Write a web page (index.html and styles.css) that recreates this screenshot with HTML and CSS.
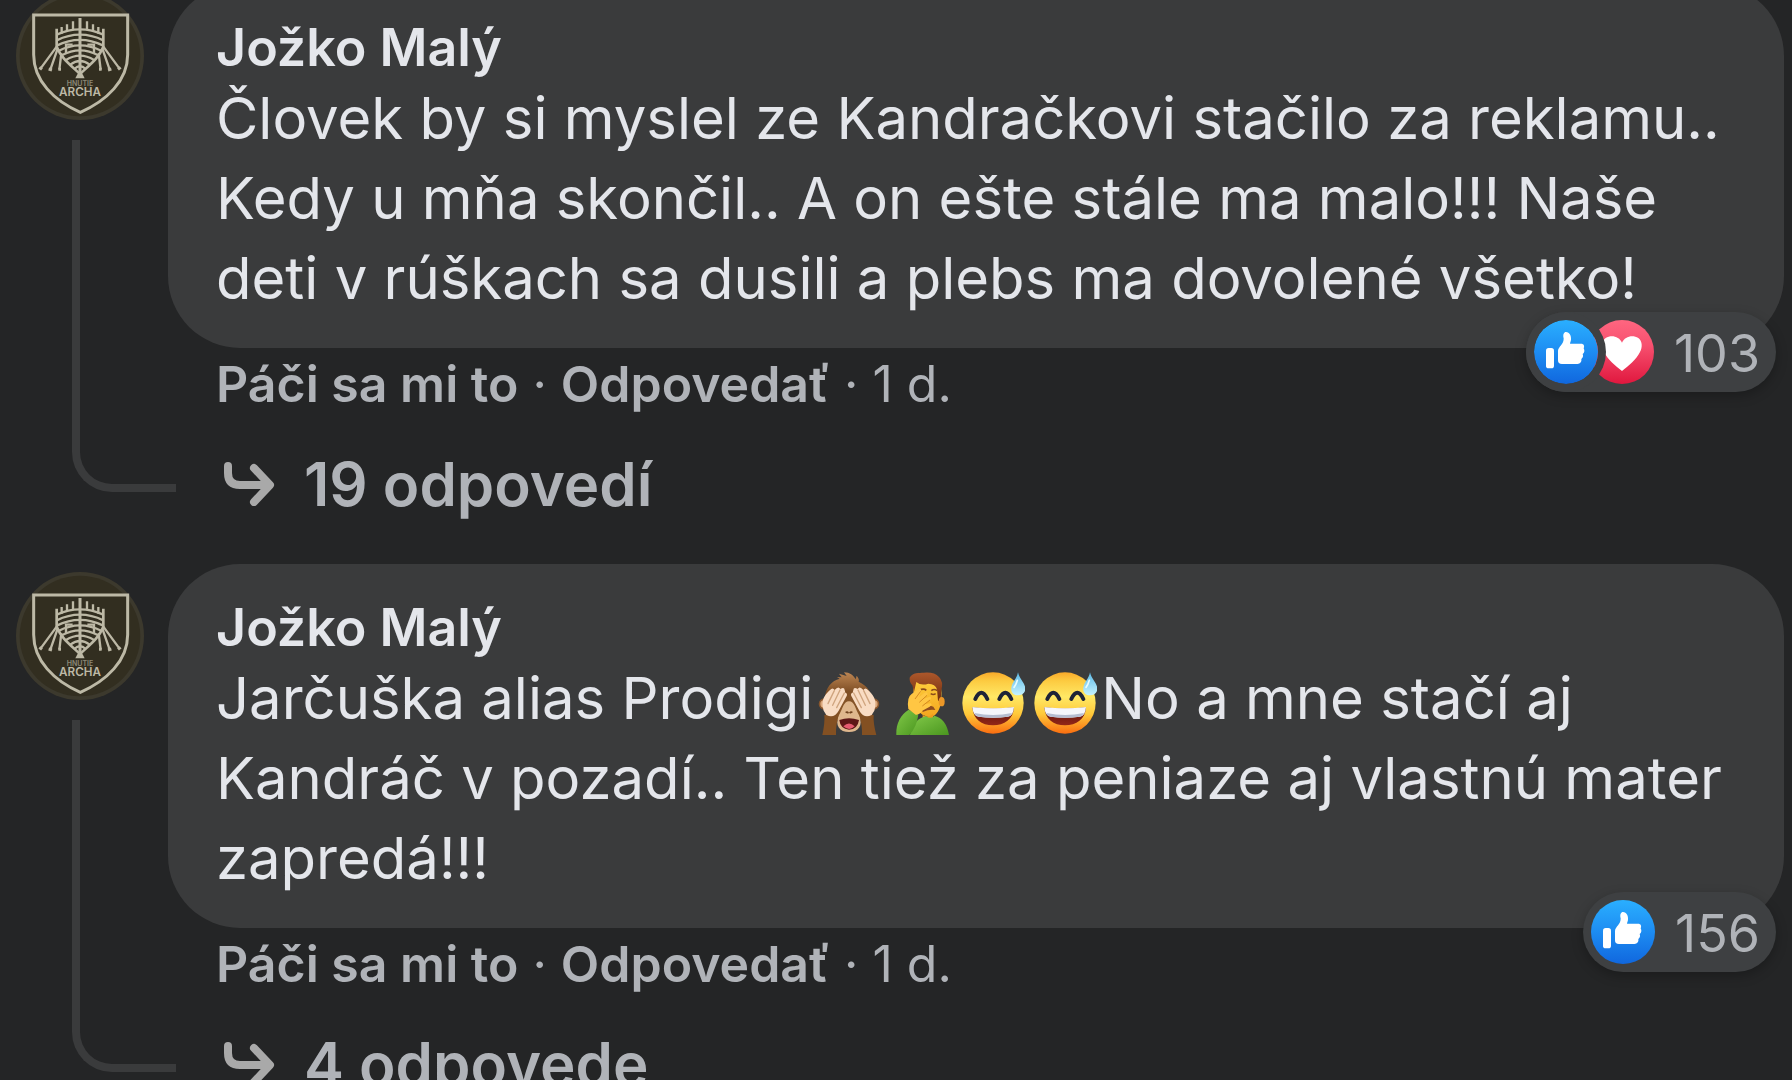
FILE: index.html
```
<!DOCTYPE html>
<html lang="sk">
  <head>
    <meta charset="UTF-8" />
    <meta name="viewport" content="width=device-width, initial-scale=1.0" />
    <title>Komentáre</title>
    <link rel="stylesheet" href="styles.css">
  </head>
  <body>
    <!-- shared icons -->
    <svg class="defs" width="0" height="0" aria-hidden="true">
      <defs>
        <linearGradient id="blue" x1="0" y1="0" x2="0" y2="1">
          <stop offset="0" stop-color="#2aafff" />
          <stop offset="0.5" stop-color="#1d8cf2" />
          <stop offset="1" stop-color="#1067de" />
        </linearGradient>
        <linearGradient id="red" x1="0" y1="0" x2="0" y2="1">
          <stop offset="0" stop-color="#ff6680" />
          <stop offset="0.4" stop-color="#f7506f" />
          <stop offset="1" stop-color="#e0173e" />
        </linearGradient>
        <linearGradient id="face" x1="0" y1="0" x2="0" y2="1">
          <stop offset="0" stop-color="#f9a92a" />
          <stop offset="0.14" stop-color="#fccb41" />
          <stop offset="0.4" stop-color="#ffe865" />
          <stop offset="0.68" stop-color="#ffc93a" />
          <stop offset="1" stop-color="#fa6d10" />
        </linearGradient>
        <linearGradient id="mouth" x1="0" y1="0" x2="0" y2="1">
          <stop offset="0" stop-color="#55100c" />
          <stop offset="1" stop-color="#942717" />
        </linearGradient>
        <linearGradient id="drop" x1="0" y1="0" x2="0" y2="1">
          <stop offset="0" stop-color="#5bb9e6" />
          <stop offset="1" stop-color="#c5f2ff" />
        </linearGradient>
        <linearGradient id="fur" x1="0" y1="0" x2="0" y2="1">
          <stop offset="0" stop-color="#bd8653" />
          <stop offset="0.4" stop-color="#805026" />
          <stop offset="1" stop-color="#8b5829" />
        </linearGradient>
        <linearGradient id="shirt" x1="0" y1="0" x2="1" y2="1">
          <stop offset="0" stop-color="#82c949" />
          <stop offset="1" stop-color="#4a961f" />
        </linearGradient>
        <linearGradient id="hair" x1="0" y1="0" x2="0" y2="1">
          <stop offset="0" stop-color="#ad572b" />
          <stop offset="1" stop-color="#71300f" />
        </linearGradient>
        <linearGradient id="skin" x1="0" y1="0" x2="0" y2="1">
          <stop offset="0" stop-color="#ffcf3d" />
          <stop offset="1" stop-color="#f3a51f" />
        </linearGradient>

        <symbol id="logo" viewBox="0 0 384 384">
          <circle cx="192" cy="192" r="192" fill="#3c392d" />
          <circle cx="192" cy="192" r="181" fill="#322e20" />
          <g fill="none" stroke="#bdb9a6" stroke-width="9">
            <path d="M53 69H335V188C335 266 272 326 193 361C114 326 53 266 53 188Z" />
            <path d="M192 78V250" stroke-width="9" />
            <path d="M122 110V164C136 198 158 214 192 246C226 214 248 198 262 164V110" stroke-width="8" />
            <g stroke-width="7">
              <path d="M137 105V125M153 97V120M171 88V115M213 88V115M231 97V120M247 105V125" />
              <path d="M122 128Q192 96 262 128M122 145Q192 111 262 145M122 161Q192 126 262 161" />
              <path d="M127 177Q192 143 257 177M137 190Q192 160 247 190M150 204Q192 178 234 204M163 218Q192 196 221 218M175 231Q192 215 209 231" />
              <path d="M122 164L74 229M125 170L103 233M136 184L130 233M262 164L310 229M259 170L281 233M248 184L254 233" />
              <path d="M150 184V158H170M234 184V158H214" />
            </g>
            <path d="M70 226l8 6M98 231l10 3M127 232h8M314 226l-8 6M286 231l-10 3M257 232h-8" />
          </g>
          <path d="M192 232L206 259H178Z" fill="#bdb9a6" />
          <text x="192" y="283" class="logo-small">HNUTIE</text>
          <text x="192" y="313" class="logo-big">ARCHA</text>
        </symbol>

        <symbol id="like" viewBox="0 0 192 192">
          <circle cx="96" cy="96" r="96" fill="url(#blue)" />
          <rect x="36" y="84" width="24" height="61" rx="8" fill="#fff" />
          <path fill="#fff" d="M72 93C73 80 90 73 89 55C86 43 90 36 96 36C107 36 112 48 111 58C111 66 106 71 109 71H141C150 71 152 78 149 85C153 92 151 99 146 102C149 109 146 114 142 117C144 128 136 132 127 132H84C76 132 72 129 72 121Z" />
        </symbol>

        <symbol id="heart" viewBox="0 0 192 192">
          <circle cx="96" cy="96" r="96" fill="url(#red)" />
          <path fill="#fff" d="M96 68C88 49 64 43 47 54C35 63 34 82 42 96C53 119 77 138 96 153C115 138 139 119 150 96C158 82 157 63 145 54C128 43 104 49 96 68Z" />
        </symbol>

        <symbol id="arrow" viewBox="0 0 52 44">
          <path d="M4 4V11Q4 23 16 23H45M30 6L46 23L30 40" fill="none" stroke="#a9a9a9" stroke-width="8" stroke-linecap="round" stroke-linejoin="round" />
        </symbol>

        <symbol id="monkey" viewBox="0 0 192 192">
          <circle cx="22" cy="99" r="17" fill="#8b572d" />
          <circle cx="170" cy="99" r="17" fill="#8b572d" />
          <circle cx="21" cy="99" r="11" fill="#dba77a" />
          <circle cx="171" cy="99" r="11" fill="#dba77a" />
          <path d="M22 88C25 48 45 29 68 23L60 18L74 19L66 8L89 15L81 4C99 5 109 12 116 25L119 14Q128 25 125 32C152 44 167 68 169 100L158 147H35Z" fill="url(#fur)" />
          <path d="M96 91C79 91 78 113 65 134C53 163 68 183 96 183C124 183 139 163 127 134C114 113 113 91 96 91Z" fill="#dfb78d" />
          <path d="M22 132L67 123Q56 160 57 192H16Q24 155 22 132ZM170 132L125 123Q136 160 135 192H178Q168 155 170 132Z" fill="#835022" />
          <g id="paw">
            <path d="M20 119C9 84 27 69 39 57Q47 48 53 57Q64 43 70 54Q82 47 83 57L85 65Q94 67 87 79L65 119Q51 144 28 132Z" fill="#f9dcc3" />
            <path d="M52 59L33 98M69 57L47 103M82 66L59 110" fill="none" stroke="#cfa47e" stroke-width="4" stroke-linecap="round" />
          </g>
          <use href="#paw" transform="matrix(-1 0 0 1 192 0)" />
          <path d="M86 125q5-4 8 2M98 127q4-6 8-2" fill="none" stroke="#70431f" stroke-width="5" />
          <path d="M67 147Q96 137 126 147Q122 175 96 176Q70 174 67 147Z" fill="#5e1717" />
          <path d="M79 166Q96 149 113 166Q97 182 79 166Z" fill="#e65b70" />
        </symbol>

        <symbol id="facepalm" viewBox="0 0 192 192">
          <g transform="translate(13 0)">
            <path d="M60 36Q95 18 139 35Q149 61 141 103C136 128 119 142 103 137Q72 131 61 92Z" fill="url(#skin)" />
            <path d="M49 20C57 3 78 6 91 5Q123 2 137 18Q151 31 144 59L142 89H134L131 55Q126 39 105 38Q83 45 69 33L62 62L57 43Q48 34 49 20Z" fill="url(#hair)" />
            <ellipse cx="145" cy="92" rx="9" ry="14" fill="#eb9728" />
            <path d="M78 58q13-7 21 0M114 59q8-7 18 0" fill="none" stroke="#8b4b1b" stroke-width="5" />
            <path d="M112 68q8 5 15 0" fill="none" stroke="#8b4b1b" stroke-width="4" />
            <path d="M86 114Q101 99 120 107L126 117Q107 114 88 123Z" fill="#8e4c20" />
            <path d="M88 132Q105 143 119 128V151H88Z" fill="#ee9c1b" />
            <path d="M50 192C57 159 75 140 98 136Q112 146 123 134Q158 142 167 192Z" fill="url(#shirt)" />
            <path d="M9 192C7 157 23 130 46 116L75 131Q70 168 48 192Z" fill="url(#shirt)" />
            <path d="M45 114Q40 79 54 70L76 53Q84 50 84 61L77 78L94 65Q104 61 102 72L91 83L109 77Q117 79 110 87L92 99L112 97Q119 101 109 107L87 119Q78 132 67 131Z" fill="#ffc643" />
            <path d="M82 61L65 84M101 73L78 94M110 87L87 105" fill="none" stroke="#d58b22" stroke-width="3" />
          </g>
        </symbol>

        <symbol id="sweat" viewBox="0 0 192 192">
          <g transform="translate(3 0)">
            <circle cx="93" cy="96" r="92" fill="url(#face)" />
            <path d="M40 84Q58 47 76 84M112 84Q130 47 148 84" fill="none" stroke="#1e2337" stroke-width="12" stroke-linecap="round" />
            <path d="M31 109Q93 117 156 109C154 145 127 163 93 163C58 163 34 145 31 109Z" fill="url(#mouth)" />
            <path d="M31 108Q93 116 156 108Q154 137 137 137Q94 143 50 137Q33 136 31 108Z" fill="#f5f6fb" />
            <path d="M37 126Q93 138 150 126Q144 137 137 137Q94 143 50 137Q41 136 37 126Z" fill="#b5bdd0" />
            <path d="M168 4C172 24 190 36 190 54C190 66 180 73 168 73C155 73 146 64 148 50C150 34 165 23 168 4Z" fill="url(#drop)" />
            <path d="M166 28Q162 42 156 49" fill="none" stroke="#e8fcff" stroke-width="5" stroke-linecap="round" />
          </g>
        </symbol>
      </defs>
    </svg>

    <main class="comments">
      <article class="comment">
        <div class="side">
          <svg class="avatar" role="img" aria-label="Hnutie Archa"><use href="#logo" /></svg>
          <div class="thread"></div>
        </div>
        <div class="main">
          <div class="bubble">
            <a href="#" class="name">Jožko Malý</a>
            <p class="text">Človek by si myslel ze Kandračkovi stačilo za reklamu.. Kedy u mňa skončil.. A on ešte stále ma malo!!! Naše deti v rúškach sa dusili a plebs ma dovolené všetko!</p>
            <button type="button" class="reactions">
              <svg class="reaction front"><use href="#like" /></svg>
              <svg class="reaction"><use href="#heart" /></svg>
              <span class="count">103</span>
            </button>
          </div>
          <div class="actions">
            <button type="button" class="action">Páči sa mi to</button>
            <span class="dot">·</span>
            <button type="button" class="action">Odpovedať</button>
            <span class="dot">·</span>
            <a href="#" class="time">1 d.</a>
          </div>
          <button type="button" class="replies">
            <svg class="arrow"><use href="#arrow" /></svg>
            19 odpovedí
          </button>
        </div>
      </article>

      <article class="comment">
        <div class="side">
          <svg class="avatar" role="img" aria-label="Hnutie Archa"><use href="#logo" /></svg>
          <div class="thread"></div>
        </div>
        <div class="main">
          <div class="bubble">
            <a href="#" class="name">Jožko Malý</a>
            <p class="text">Jarčuška alias Prodigi<svg class="emoji"><use href="#monkey" /></svg><svg class="emoji"><use href="#facepalm" /></svg><svg class="emoji"><use href="#sweat" /></svg><svg class="emoji"><use href="#sweat" /></svg>No a mne stačí aj Kandráč v pozadí.. Ten tiež za peniaze aj vlastnú mater zapredá!!!</p>
            <button type="button" class="reactions">
              <svg class="reaction"><use href="#like" /></svg>
              <span class="count">156</span>
            </button>
          </div>
          <div class="actions">
            <button type="button" class="action">Páči sa mi to</button>
            <span class="dot">·</span>
            <button type="button" class="action">Odpovedať</button>
            <span class="dot">·</span>
            <a href="#" class="time">1 d.</a>
          </div>
          <button type="button" class="replies">
            <svg class="arrow"><use href="#arrow" /></svg>
            4 odpovede
          </button>
        </div>
      </article>
    </main>
  </body>
</html>
```

FILE: styles.css
```
* {
  box-sizing: border-box;
}
body {
  margin: 0;
  height: 100vh;
  overflow: hidden;
  background-color: #242526;
  color: #e4e6eb;
  font-family: Inter, "Liberation Sans", sans-serif;
  font-optical-sizing: none;
}
button {
  border: none;
  padding: 0;
  background: none;
  color: #b0b3b8;
  font-family: inherit;
  cursor: pointer;
}
a {
  color: inherit;
  text-decoration: none;
}
.defs {
  position: absolute;
}
/* list is scrolled a little past its first comment */
.comments {
  margin-top: -16px;
}
.comment {
  display: flex;
  padding: 0 8px 40px 16px;
}
.side {
  display: flex;
  flex-direction: column;
  flex: none;
  width: 128px;
  margin-right: 24px;
  padding: 8px 0 32px;
}
.avatar {
  display: block;
  width: 128px;
  height: 128px;
}
.logo-small,
.logo-big {
  fill: #bdb9a6;
  text-anchor: middle;
  font-weight: 600;
}
.logo-small {
  font-size: 21px;
  opacity: 0.65;
}
.logo-big {
  font-size: 35px;
}
.thread {
  flex: 1;
  width: 104px;
  margin: 20px 0 0 56px;
  border-left: 8px solid #3a3b3c;
  border-bottom: 8px solid #3a3b3c;
  border-bottom-left-radius: 40px;
}
.main {
  flex: 1;
  min-width: 0;
}
.bubble {
  position: relative;
  padding: 34px 48px 30px;
  border-radius: 72px;
  background-color: #3a3b3c;
}
.name {
  display: block;
  font-size: 52px;
  font-weight: 600;
  line-height: 60px;
}
.text {
  margin: 0;
  font-size: 58px;
  line-height: 80px;
}
.emoji {
  width: 64px;
  height: 64px;
  margin: 0 4px;
  vertical-align: -16px;
}
/* badge hangs over the bottom corner of the bubble */
.reactions {
  position: absolute;
  right: 8px;
  bottom: -44px;
  display: flex;
  align-items: center;
  height: 80px;
  padding: 0 16px 0 8px;
  border-radius: 40px;
  background-color: #3e4042;
  box-shadow: 0 4px 12px rgba(0, 0, 0, 0.25);
}
.reaction {
  width: 64px;
  height: 64px;
}
.front {
  position: relative;
  margin-right: -8px;
  border-radius: 50%;
  box-shadow: 0 0 0 8px #3e4042;
}
.count {
  margin-left: 20px;
  padding-top: 4px;
  font-size: 52px;
  line-height: 64px;
}
.actions {
  display: flex;
  gap: 14px;
  padding-left: 48px;
  color: #b0b3b8;
  font-size: 50px;
  line-height: 72px;
}
.action {
  font-size: 50px;
  font-weight: 600;
  line-height: 72px;
}
.replies {
  display: flex;
  align-items: center;
  margin: 24px 0 0 56px;
  font-size: 60px;
  font-weight: 600;
  line-height: 80px;
}
.arrow {
  width: 52px;
  height: 44px;
  margin-right: 28px;
}
```
